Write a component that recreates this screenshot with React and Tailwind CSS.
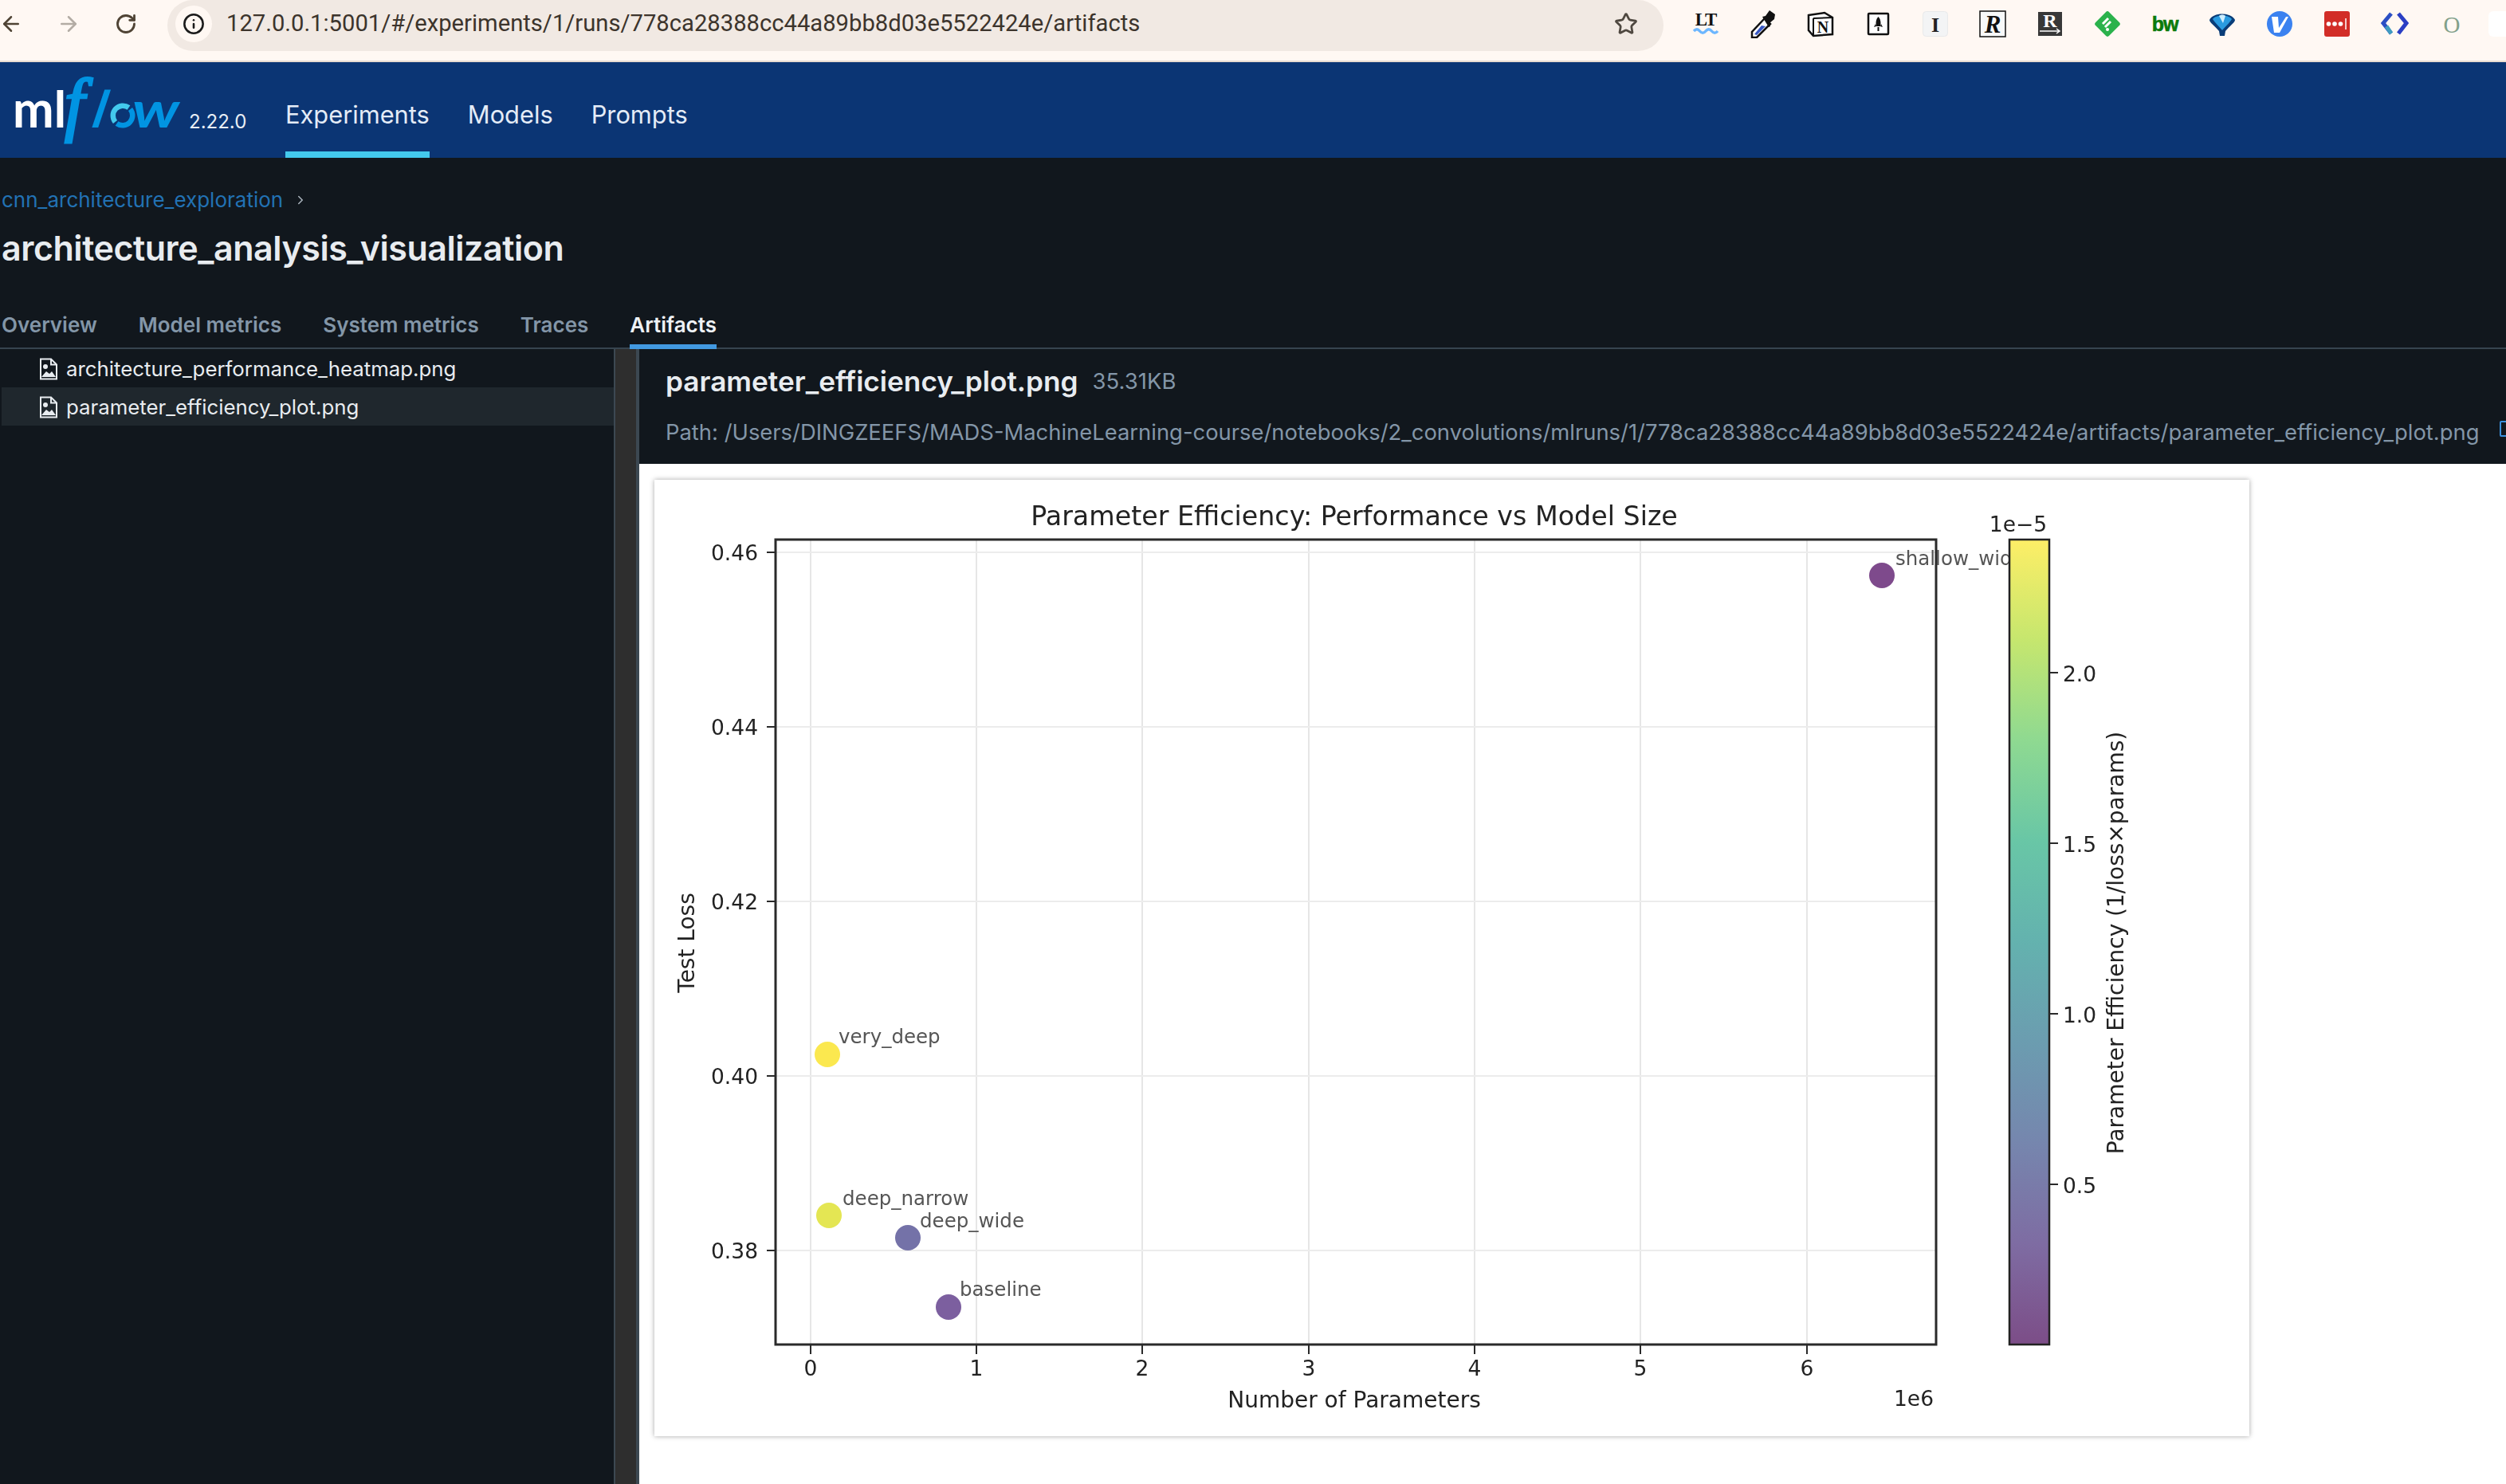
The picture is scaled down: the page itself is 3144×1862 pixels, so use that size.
import React from "react";
import { ArrowLeft, ArrowRight, RotateCw, Info, Star, ChevronRight } from "lucide-react";

const serif = '"Liberation Serif", serif';
const sans = '"Liberation Sans", sans-serif';

function Ext({ children }) {
  return (
    <svg width="36" height="36" viewBox="0 0 36 36" className="shrink-0 block">
      {children}
    </svg>
  );
}

function ToolbarIcons() {
  return (
    <div className="flex items-center gap-[36px] ml-[35px]">
      <Ext>
        <text x="18" y="20" textAnchor="middle" fontFamily={serif} fontWeight="700" fontSize="23" fill="#111" letterSpacing="-1">LT</text>
        <path d="M3 27c3-3 5-3 7.500 0s5 3 7.500 0 5-3 7.500 0 5 3 7.500 0" fill="none" stroke="#6db7ff" strokeWidth="3.500" />
      </Ext>
      <Ext>
        <path d="M4 35l0-7L20 11l7 7L10 35z" fill="#fff" stroke="#111" strokeWidth="2.500" />
        <path d="M7 31l9-11 5 1-11 11z" fill="#3657c4" />
        <path d="M17 9l4-1 5-7 7 5-1 6-6 5 1 4-2 1z" fill="#111" />
      </Ext>
      <Ext>
        <path d="M3 7l20-3 10 6v21l-24 2-6-7z" fill="#fff" stroke="#111" strokeWidth="2.500" />
        <path d="M9 11l24-1" stroke="#111" strokeWidth="2" />
        <path d="M9 11v21" stroke="#111" strokeWidth="2" />
        <text x="21" y="29" textAnchor="middle" fontFamily={serif} fontWeight="700" fontSize="20" fill="#111">N</text>
      </Ext>
      <Ext>
        <rect x="6" y="5" width="25" height="26" rx="1" fill="#fff" stroke="#111" strokeWidth="2.500" />
        <path d="M18.500 9c3 3 3.500 8 2.500 12h-5c-1-4-.5-9 2.500-12z" fill="#111" />
        <path d="M15 18l-2 4 3-1zM22 18l2 4-3-1z" fill="#111" />
        <path d="M18.500 22v5" stroke="#111" strokeWidth="2" />
      </Ext>
      <Ext>
        <rect x="2.500" y="2.500" width="31" height="31" rx="4" fill="#f3f4f5" stroke="#e8e9ea" />
        <text x="18" y="28" textAnchor="middle" fontFamily={serif} fontWeight="700" fontSize="26" fill="#222">I</text>
      </Ext>
      <Ext>
        <rect x="2" y="2" width="32" height="32" fill="#f7f9f9" stroke="#111" strokeWidth="1.500" />
        <text x="18" y="28.500" textAnchor="middle" fontFamily={serif} fontWeight="700" fontStyle="italic" fontSize="31" fill="#111">R</text>
      </Ext>
      <Ext>
        <rect x="3" y="3" width="30" height="30" fill="#383838" />
        <text x="18" y="22" textAnchor="middle" fontFamily={serif} fontWeight="700" fontSize="24" fill="#fff">R</text>
        <path d="M5 27h25m-4-3l4 3-4 3" stroke="#fff" strokeWidth="1.500" fill="none" />
      </Ext>
      <Ext>
        <rect x="6" y="6" width="24" height="24" rx="3" fill="#2bb24c" transform="rotate(45 18 18)" />
        <path d="M12 18l7-7M15 22l7-7" stroke="#fff" strokeWidth="3" />
        <circle cx="21" cy="26" r="2" fill="#fff" transform="translate(-3 -1)" />
      </Ext>
      <Ext>
        <text x="18" y="27" textAnchor="middle" fontFamily={sans} fontWeight="700" fontSize="25" fill="#0b7a0b" letterSpacing="-1" stroke="#0b7a0b" strokeWidth="0.600">bw</text>
      </Ext>
      <Ext>
        <path d="M2 13C6 3 30 3 34 13c0 3-6 7-12 14l-1 6h-6l-1-6C8 20 2 16 2 13z" fill="#0a3d78" />
        <path d="M6 12c4-6 20-6 24 0-3 5-7 8-12 14C14 21 9 17 6 12z" fill="#2a9be0" />
        <path d="M14 8c2-2 6-2 8 0l-3 9z" fill="#cdeeff" />
      </Ext>
      <Ext>
        <circle cx="18" cy="18" r="16" fill="#3b82f0" />
        <path d="M8 9h8l1 14 9-14h3L18 29h-7z" fill="#fff" />
      </Ext>
      <Ext>
        <rect x="2" y="2" width="32" height="32" rx="3" fill="#d22d27" />
        <circle cx="7.500" cy="18" r="2.800" fill="#fff" />
        <circle cx="15" cy="18" r="2.800" fill="#fff" />
        <circle cx="22.500" cy="18" r="2.800" fill="#fff" />
        <path d="M29 11v14" stroke="#fff" strokeWidth="1.500" />
      </Ext>
      <Ext>
        <path d="M14 5L4 17l10 13" fill="none" stroke="#2b4fc4" strokeWidth="5" />
        <path d="M23 5l10 12-10 13" fill="none" stroke="#2b3fc4" strokeWidth="5" />
        <path d="M8 21l6 9" stroke="#3f9cc0" strokeWidth="5" />
      </Ext>
      <Ext>
        <text x="18" y="29" textAnchor="middle" fontFamily={serif} fontSize="29" fill="#82a08a">O</text>
      </Ext>
      <div className="w-[40px] h-[32px] rounded-l-[6px] bg-white flex items-center justify-end shrink-0 ml-[-8px]">
        <div className="w-[18px] h-[3px] bg-[#2f8fe8]" />
      </div>
    </div>
  );
}

function Logo() {
  return (
    <svg width="232" height="120" viewBox="0 78 232 120" className="block shrink-0">
      <text x="16" y="160" fontFamily="Lato, sans-serif" fontWeight="700" fontSize="64" fill="#fff" textLength="67" lengthAdjust="spacingAndGlyphs">ml</text>
      <text x="81" y="160" fontFamily={serif} fontStyle="italic" fontSize="89" fill="#0194e2" stroke="#0194e2" strokeWidth="3">f</text>
      <text transform="translate(114 160) skewX(-12)" fontFamily="Lato, sans-serif" fontStyle="italic" fontWeight="700" fontSize="64" fill="#0194e2">l</text>
      <path d="M144.500 153a12.500 12.500 0 0 1 17-18" fill="none" stroke="#43c9ed" strokeWidth="6.500" />
      <path d="M163.500 137a12.500 12.500 0 0 1-17 18" fill="none" stroke="#0194e2" strokeWidth="6.500" />
      <text x="166" y="160" fontFamily="Lato, sans-serif" fontStyle="italic" fontWeight="700" fontSize="62" fill="#0194e2" textLength="59" lengthAdjust="spacingAndGlyphs">w</text>
    </svg>
  );
}

function FileIcon() {
  return (
    <svg width="24" height="28" viewBox="0 0 24 28" className="block shrink-0" fill="none">
      <path d="M2 1.500h13l7 7v18H2z" stroke="#e8ecf0" strokeWidth="2" />
      <path d="M15 1.500v7h7" stroke="#e8ecf0" strokeWidth="2" />
      <circle cx="8" cy="11" r="3" fill="#e8ecf0" />
      <path d="M3 24l6-7 4 3 3-3 5 7z" fill="#e8ecf0" />
    </svg>
  );
}

const grid = { xs: [1017, 1225, 1433, 1642, 1850, 2058, 2267], ys: [693, 912, 1131, 1350, 1569] };
const yLabels = ["0.46", "0.44", "0.42", "0.40", "0.38"];
const points = [
  { x: 2361, y: 722, c: "#7e4a8c", t: "shallow_wide", tx: 2378, ty: 709 },
  { x: 1038, y: 1323, c: "#fbe84f", t: "very_deep", tx: 1052, ty: 1309 },
  { x: 1040, y: 1525, c: "#e4e653", t: "deep_narrow", tx: 1057, ty: 1512 },
  { x: 1139, y: 1553, c: "#7472a8", t: "deep_wide", tx: 1154, ty: 1540 },
  { x: 1190, y: 1640, c: "#7c5f9f", t: "baseline", tx: 1204, ty: 1626 },
];
const cbTicks = [
  ["2.0", 844],
  ["1.5", 1058],
  ["1.0", 1272],
  ["0.5", 1486],
];

function Chart() {
  const font = '"DejaVu Sans", sans-serif';
  return (
    <svg width="2001" height="1200" viewBox="821 602 2001 1200" className="block blur-[0.6px]" fontFamily={font} fill="#222">
      <defs>
        <linearGradient id="viridis" x1="0" y1="1" x2="0" y2="0">
          {[
            [0, "#440154"], [0.125, "#472d7b"], [0.25, "#3b528b"], [0.375, "#2c728e"], [0.5, "#21918c"],
            [0.625, "#28ae80"], [0.75, "#5ec962"], [0.875, "#addc30"], [1, "#fde725"],
          ].map(([o, c]) => (
            <stop key={o} offset={o} stopColor={c} stopOpacity="0.7" />
          ))}
        </linearGradient>
      </defs>
      <text x="1699" y="659" textAnchor="middle" fontSize="33.300">Parameter Efficiency: Performance vs Model Size</text>
      {grid.xs.map((x) => (
        <line key={x} x1={x} x2={x} y1="677" y2="1687" stroke="#e6e6e6" strokeWidth="2" />
      ))}
      {grid.ys.map((y) => (
        <line key={y} x1="973" x2="2429" y1={y} y2={y} stroke="#ececec" strokeWidth="2" />
      ))}
      {points.map((p) => (
        <g key={p.t}>
          <circle cx={p.x} cy={p.y} r="16" fill={p.c} />
          <text x={p.tx} y={p.ty} fontSize="24.500" fill="#555">{p.t}</text>
        </g>
      ))}
      <rect x="973" y="677" width="1456" height="1010" fill="none" stroke="#2a2a2a" strokeWidth="3" />
      {grid.xs.map((x, i) => (
        <g key={x}>
          <line x1={x} x2={x} y1="1688" y2="1699" stroke="#2a2a2a" strokeWidth="2" />
          <text x={x} y="1726" textAnchor="middle" fontSize="26.500">{i}</text>
        </g>
      ))}
      {grid.ys.map((y, i) => (
        <g key={y}>
          <line x1="962" x2="973" y1={y} y2={y} stroke="#2a2a2a" strokeWidth="2" />
          <text x="951" y={y + 10} textAnchor="end" fontSize="26.500">{yLabels[i]}</text>
        </g>
      ))}
      <text x="1699" y="1766" textAnchor="middle" fontSize="28">Number of Parameters</text>
      <text x="2426" y="1764" textAnchor="end" fontSize="26.500">1e6</text>
      <text transform="translate(871 1183) rotate(-90)" textAnchor="middle" fontSize="28">Test Loss</text>
      <rect x="2521" y="677" width="50" height="1010" fill="#fff" />
      <rect x="2521" y="677" width="50" height="1010" fill="url(#viridis)" stroke="#222" strokeWidth="2.500" />
      <text x="2568" y="667" textAnchor="end" fontSize="26.500">1e−5</text>
      {cbTicks.map(([t, y]) => (
        <g key={t}>
          <line x1="2571" x2="2582" y1={y} y2={y} stroke="#2a2a2a" strokeWidth="2" />
          <text x="2588" y={y + 11} fontSize="26.500">{t}</text>
        </g>
      ))}
      <text transform="translate(2664 1183) rotate(-90)" textAnchor="middle" fontSize="28">Parameter Efficiency (1/loss×params)</text>
    </svg>
  );
}

const tabs = ["Overview", "Model metrics", "System metrics", "Traces", "Artifacts"];

export default function App() {
  return (
    <div className="w-[3144px] h-[1862px] overflow-hidden flex flex-col bg-[#11171d] font-['Inter',sans-serif]">
      {/* Browser toolbar */}
      <div className="h-[78px] shrink-0 bg-[#fff8f3] border-b-2 border-[#e8dcd0] flex items-start">
        <div className="flex items-center h-[60px] w-[210px] shrink-0 text-[#4f4334]">
          <ArrowLeft size={30} strokeWidth={2} className="ml-[-1px]" />
          <ArrowRight size={30} strokeWidth={2} className="ml-[42px] text-[#b3aca4]" />
          <RotateCw size={28} strokeWidth={2.4} className="ml-[43px]" />
        </div>
        <div className="w-[1877px] h-[64px] shrink-0 bg-[#f1e9e3] rounded-full flex items-center pr-[32px] pb-[4px]">
          <div className="ml-[10px] w-[46px] h-[46px] rounded-full bg-[#fff8f3] flex items-center justify-center">
            <Info size={28} strokeWidth={2.2} className="text-[#1b1b1b]" />
          </div>
          <span className="ml-[18px] text-[29.2px] text-[#3c342c] font-['Roboto',sans-serif] whitespace-nowrap">
            127.0.0.1:5001/#/experiments/1/runs/778ca28388cc44a89bb8d03e5522424e/artifacts
          </span>
          <Star size={30} strokeWidth={2.2} className="ml-auto text-[#4f4840]" />
        </div>
        <div className="h-[60px] flex items-center">
          <ToolbarIcons />
        </div>
      </div>

      {/* App nav */}
      <div className="h-[120px] shrink-0 bg-[#0b3574] flex">
        <Logo />
        <div className="text-[24px] text-[#e8eef5] ml-[5px] pt-[57px] w-[121px] shrink-0 leading-[36px]">2.22.0</div>
        <div className="flex gap-[48px] text-[30.8px] text-[#e4ecf7] h-full">
          <div className="h-full flex items-center border-b-8 border-[#43c9ed] pt-[20px]">Experiments</div>
          <div className="h-full flex items-center border-b-8 border-transparent pt-[20px]">Models</div>
          <div className="h-full flex items-center border-b-8 border-transparent pt-[20px]">Prompts</div>
        </div>
      </div>

      {/* Run header */}
      <div className="h-[240px] shrink-0 border-b-2 border-[#37444f] flex flex-col pl-[2px]">
        <div className="mt-[37px] h-[32px] flex items-center text-[26px] text-[#2272b4] leading-[32px]">
          cnn_architecture_exploration
          <ChevronRight size={18} strokeWidth={2} className="ml-[13px] text-[#aab4bd]" />
        </div>
        <div className="mt-[16px] h-[56px] text-[43px] tracking-[-0.46px] leading-[56px] font-semibold text-[#e8ecf0] whitespace-nowrap">
          architecture_analysis_visualization
        </div>
        <div className="mt-auto mb-[-2px] flex gap-[52px] text-[26px] font-semibold text-[#8396a8]">
          {tabs.map((t) => (
            <div
              key={t}
              className={t === "Artifacts" ? "h-[56px] flex items-center border-b-[6px] border-[#4299e0] text-[#eef2f6]" : "h-[56px] flex items-center border-b-[6px] border-transparent"}
            >
              {t}
            </div>
          ))}
        </div>
      </div>

      {/* Body */}
      <div className="flex-1 min-h-0 flex">
        <div className="w-[770px] shrink-0 pl-[2px] text-[25.8px] text-[#e8ecf0]">
          <div className="h-[48px] flex items-center pl-[47px] gap-[10px] pt-[1px]">
            <FileIcon />
            <span className="pt-[2px]">architecture_performance_heatmap.png</span>
          </div>
          <div className="h-[48px] flex items-center pl-[47px] gap-[10px] bg-[#1f272d] pt-[1px]">
            <FileIcon />
            <span className="pt-[2px]">parameter_efficiency_plot.png</span>
          </div>
        </div>
        <div className="w-[32px] shrink-0 bg-[#2e2e2e] border-l-2 border-r-4 border-[#3c4852]" />
        <div className="flex-1 min-w-0 flex flex-col">
          <div className="h-[144px] shrink-0 pl-[33px] relative overflow-hidden">
            <div className="flex items-center h-[40px] mt-[20px] whitespace-nowrap">
              <span className="text-[35.2px] font-semibold text-[#e8ecf0]">parameter_efficiency_plot.png</span>
              <span className="ml-[18px] text-[27.5px] text-[#8396a8] pt-[1px]">35.31KB</span>
            </div>
            <div className="mt-[25px] h-[40px] flex items-center text-[27.4px] text-[#8396a8] whitespace-nowrap">
              Path: /Users/DINGZEEFS/MADS-MachineLearning-course/notebooks/2_convolutions/mlruns/1/778ca28388cc44a89bb8d03e5522424e/artifacts/parameter_efficiency_plot.png
            </div>
            <div className="absolute left-[2334px] top-[90px] w-[16px] h-[20px] border-2 border-[#3a8fdc] rounded-[2px]" />
          </div>
          <div className="flex-1 bg-white pl-[19px] pt-[20px]">
            <div className="w-[2001px] h-[1200px] bg-white shadow-[0_0_6px_rgba(0,0,0,0.35)]">
              <Chart />
            </div>
          </div>
        </div>
      </div>
    </div>
  );
}
